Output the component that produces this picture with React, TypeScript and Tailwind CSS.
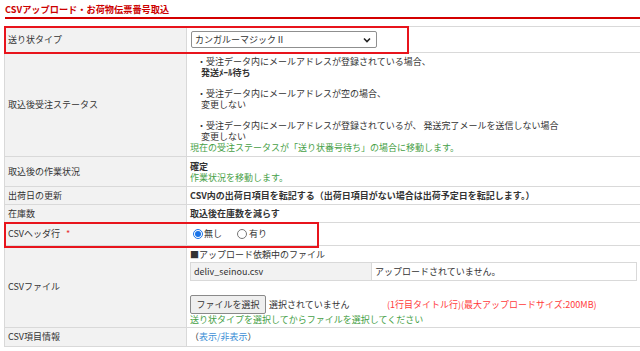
import React from "react";

function Row({
  label,
  h,
  children,
  required,
}: {
  label: string;
  h: string;
  children: React.ReactNode;
  required?: boolean;
}) {
  return (
    <div className={`flex border-b border-[#d9d9d9] ${h}`}>
      <div className="w-[182px] shrink-0 flex items-center pl-[3px] bg-[#f2f2f2] border-r border-[#d9d9d9]">
        {label}
        {required && <span className="ml-[6px] text-[#e83030]">*</span>}
      </div>
      <div className="flex-1 px-[3px] flex flex-col justify-center">{children}</div>
    </div>
  );
}

function Radio({ checked, className = "" }: { checked?: boolean; className?: string }) {
  return checked ? (
    <span
      className={`w-[10px] h-[10px] shrink-0 rounded-full border border-[#1a73e8] flex items-center justify-center ${className}`}
    >
      <span className="w-[6px] h-[6px] rounded-full bg-[#1a73e8]" />
    </span>
  ) : (
    <span className={`w-[10px] h-[10px] shrink-0 rounded-full border border-[#767676] bg-white ${className}`} />
  );
}

export default function App() {
  return (
    <div className="w-[640px] h-[351px] overflow-hidden bg-white text-[#333] text-[9px] leading-[10px] font-['Noto_Sans_CJK_JP','Noto_Sans',sans-serif]">
      {/* heading */}
      <div className="h-[17px] pl-[5px] pt-[4px] text-[9.2px] font-bold text-[#cc0000]">
        CSVアップロード・お荷物伝票番号取込
      </div>
      <div className="ml-[5px] h-[2px] bg-[#d40000]" />

      {/* form table */}
      <div className="relative mt-[7px] ml-[4px] border-l border-t border-[#d9d9d9]">
        <Row label="送り状タイプ" h="h-[26px]">
          <div className="w-[186px] h-[17px] ml-[1px] border border-[#8f8f8f] rounded-[2px] bg-white flex items-center justify-between pl-[3px] pr-[5px]">
            <span>カンガルーマジックⅡ</span>
            <svg width="8" height="6" viewBox="0 0 8 6">
              <path d="M1 1.5 L4 4.5 L7 1.5" fill="none" stroke="#222" strokeWidth="1.6" />
            </svg>
          </div>
        </Row>

        <Row label="取込後受注ステータス" h="h-[104px]">
          <div className="flex flex-col justify-start h-full pt-[3px] leading-[11px]">
            <div className="ml-[7px] mb-[10px]">
              <div>・受注データ内にメールアドレスが登録されている場合、</div>
              <div className="ml-[4px] font-bold">発送ﾒｰﾙ待ち</div>
            </div>
            <div className="ml-[7px] mb-[10px]">
              <div>・受注データ内にメールアドレスが空の場合、</div>
              <div className="ml-[4px]">変更しない</div>
            </div>
            <div className="ml-[7px]">
              <div>・受注データ内にメールアドレスが登録されているが、 発送完了メールを送信しない場合</div>
              <div className="ml-[4px]">変更しない</div>
            </div>
            <div className="text-[#46a046]">
              現在の受注ステータスが「送り状番号待ち」の場合に移動します。
            </div>
          </div>
        </Row>

        <Row label="取込後の作業状況" h="h-[30px]">
          <div className="leading-[11px] font-bold">確定</div>
          <div className="leading-[11px] text-[#46a046]">作業状況を移動します。</div>
        </Row>

        <Row label="出荷日の更新" h="h-[18px]">
          <div className="font-bold">
            CSV内の出荷日項目を転記する（出荷日項目がない場合は出荷予定日を転記します。）
          </div>
        </Row>

        <Row label="在庫数" h="h-[18px]">
          <div className="font-bold">取込後在庫数を減らす</div>
        </Row>

        <Row label="CSVヘッダ行" h="h-[23px]" required>
          <div className="flex items-center pl-[3px]">
            <Radio checked />
            <span className="ml-[1px]">無し</span>
            <Radio className="ml-[15px]" />
            <span className="ml-[2px]">有り</span>
          </div>
        </Row>

        <Row label="CSVファイル" h="h-[82px]">
          <div className="flex flex-col h-full pt-[4px]">
            <div>■アップロード依頼中のファイル</div>
            <div className="flex mt-[2px] h-[19px] border border-[#d9d9d9]">
              <div className="w-[181px] bg-[#f2f2f2] border-r border-[#d9d9d9] flex items-center pl-[3px]">
                deliv_seinou.csv
              </div>
              <div className="flex-1 flex items-center pl-[3px]">アップロードされていません。</div>
            </div>
            <div className="flex items-center mt-[14px]">
              <div className="w-[76px] h-[19px] border border-[#8a8a8a] rounded-[2px] bg-[#efefef] flex items-center justify-center">
                ファイルを選択
              </div>
              <span className="ml-[3px] w-[118px]">選択されていません</span>
              <span className="text-[#ff3b3b]">(1行目タイトル行)(最大アップロードサイズ:200MB)</span>
            </div>
            <div className="mt-[1px] text-[#46a046]">送り状タイプを選択してからファイルを選択してください</div>
          </div>
        </Row>

        <Row label="CSV項目情報" h="h-[19px]">
          <div>
            （<span className="text-[#3d8fd6]">表示/非表示</span>）
          </div>
        </Row>

        {/* red annotation boxes */}
        <div className="absolute left-[-1px] top-[-1px] w-[405px] h-[28px] border-2 border-[#e8141c]" />
        <div className="absolute left-[-1px] top-[195px] w-[315px] h-[26px] border-2 border-[#e8141c]" />
      </div>
    </div>
  );
}
